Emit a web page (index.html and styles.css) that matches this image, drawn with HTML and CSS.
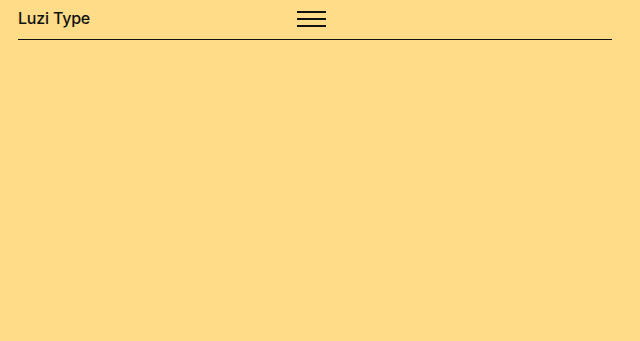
FILE: index.html
```html
<!DOCTYPE html>
<html lang="en">
<head>
    <meta charset="UTF-8">
    <meta name="viewport" content="width=device-width, initial-scale=1.0">
    <title>Luzi Type</title>
    <link rel="stylesheet" href="styles.css">
</head>
<body>
    <header class="site-header">
        <a class="logo" href="#">Luzi Type</a>
        <button class="menu-toggle" aria-label="Menu">
            <span></span>
            <span></span>
            <span></span>
        </button>
        <div class="spacer"></div>
    </header>

    <main class="content"></main>
</body>
</html>
```

FILE: styles.css
```css
body {
    font-family: Inter, "Noto Sans", sans-serif;
    background-color: #ffdc87;
    color: #111;
    margin: 0;
    padding: 0;
}
.site-header {
    display: grid;
    grid-template-columns: 1fr auto 1fr;
    align-items: center;
    margin: 0 28px 0 18px;
    height: 39px;
    border-bottom: 1px solid #111;
}
.logo {
    font-size: 16px;
    font-weight: 500;
    color: #111;
    text-decoration: none;
    letter-spacing: -0.2px;
    padding-bottom: 3px;
}
.menu-toggle {
    background: none;
    border: none;
    padding: 0;
    width: 29px;
    height: 16px;
    display: flex;
    flex-direction: column;
    justify-content: space-between;
    cursor: pointer;
    margin-left: -7px;
    margin-bottom: 2px;
}
.menu-toggle span {
    display: block;
    height: 2px;
    background-color: #111;
}
.content {
    height: 6500px;
}
```
